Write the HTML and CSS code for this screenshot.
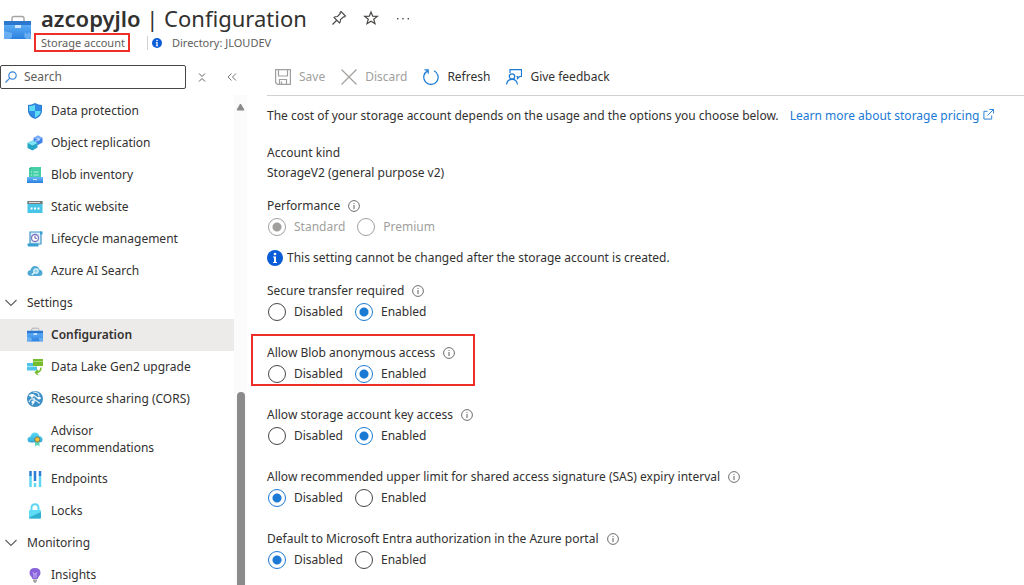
FILE: index.html
```
<!DOCTYPE html>
<html lang="en">
<head>
  <meta charset="UTF-8">
  <meta name="viewport" content="width=device-width, initial-scale=1.0">
  <title>azcopyjlo | Configuration</title>
  <link rel="stylesheet" href="styles.css">
</head>
<body>
  <!-- shared icons -->
  <svg class="sprite" aria-hidden="true">
    <defs>
      <linearGradient id="box-blue" x1="0" y1="0" x2="0" y2="1">
        <stop offset="0" stop-color="#6ab8fa" />
        <stop offset="1" stop-color="#2a80e0" />
      </linearGradient>
      <linearGradient id="cyan-fade" x1="0" y1="0" x2="0" y2="1">
        <stop offset="0" stop-color="#5fdcf5" />
        <stop offset="1" stop-color="#2fa8d8" />
      </linearGradient>
    </defs>
    <symbol id="i-toolbox" viewBox="0 0 27 26">
      <path d="M8 6V3.5Q8 1.5 10 1.5H18Q20 1.5 20 3.5V6" fill="none" stroke="#a3a3a3" stroke-width="1.400" />
      <rect x="0" y="6" width="27" height="18" rx="1" fill="url(#box-blue)" />
      <rect x="0" y="6" width="27" height="4" fill="#2b76cf" />
      <path d="M0 16L8 18V22L6 24H1L0 23Z" fill="#8cc4fa" opacity=".6" />
      <path d="M21 17L23 19L25 17L27 20V23L25 24H22L20 21Z" fill="#8cc4fa" opacity=".6" />
      <rect x="11" y="10" width="6" height="3" fill="#cfe6ff" />
    </symbol>
    <symbol id="i-info" viewBox="0 0 12 12">
      <circle cx="6" cy="6" r="5.400" fill="none" stroke="#605e5c" stroke-width="0.9" />
      <path d="M6 5V9" stroke="#605e5c" stroke-width="1" />
      <circle cx="6" cy="3.500" r=".6" fill="#605e5c" />
    </symbol>
    <symbol id="i-info-solid" viewBox="0 0 16 16">
      <circle cx="8" cy="8" r="8" fill="#0b5cd7" />
      <circle cx="8" cy="4" r="1.3" fill="#fff" />
      <path d="M6 6.500H9V12H10V13H6V12H7V7.500H6Z" fill="#fff" />
    </symbol>
    <symbol id="i-chevron" viewBox="0 0 12 12">
      <path d="M.5 3L6 8.500L11.500 3" fill="none" stroke="#605e5c" stroke-width="1.100" />
    </symbol>
  </svg>

  <div class="shell">
    <header class="header">
      <svg class="header-icon"><use href="#i-toolbox" /></svg>
      <div class="header-text">
        <div class="title-row">
          <h1><strong>azcopyjlo</strong> | Configuration</h1>
          <button class="icon-btn" type="button" aria-label="Pin">
            <svg viewBox="0 0 16 16" fill="none" stroke="#484644" stroke-width="1.100">
              <path d="M10 1.500L14.500 6L13.500 7L12.500 6.800L9.500 9.500Q9.500 12 8.500 13L3 7.500Q4 6.500 6.500 6.500L9.300 3.500L9 2.500ZM5.500 10.500L1.500 14.500" />
            </svg>
          </button>
          <button class="icon-btn" type="button" aria-label="Favorite">
            <svg viewBox="0 0 16 16" fill="none" stroke="#484644" stroke-width="1.200">
              <path d="M8 2L9.700 6.200L14.300 6.400L10.700 9.200L12 13.700L8 11.200L4 13.700L5.300 9.200L1.700 6.400L6.300 6.200Z" />
            </svg>
          </button>
          <button class="icon-btn" type="button" aria-label="More">
            <svg viewBox="0 0 16 16" fill="#484644">
              <rect x="2" y="8" width="1.400" height="1.400" /><rect x="7.300" y="8" width="1.400" height="1.400" /><rect x="12.600" y="8" width="1.400" height="1.400" />
            </svg>
          </button>
        </div>
        <div class="subtitle-row">
          <span class="resource-type marked">Storage account</span>
          <span class="directory">
            <svg><use href="#i-info-solid" /></svg>
            Directory: JLOUDEV
          </span>
        </div>
      </div>
    </header>

    <div class="body">
      <aside class="sidebar">
        <div class="search-row">
          <div class="search">
            <svg viewBox="0 0 12 12" fill="none" stroke="#3a86d8" stroke-width="1.200">
              <circle cx="7.500" cy="4.500" r="3.700" /><path d="M4.800 7.200L.5 11.500" />
            </svg>
            <input type="text" placeholder="Search" aria-label="Search">
          </div>
          <button class="icon-btn" type="button" aria-label="Expand all">
            <svg viewBox="0 0 16 16" fill="none" stroke="#605e5c"><path d="M5 4.500L8 7.500L11 4.500M5 12.500L8 9.500L11 12.500" /></svg>
          </button>
          <button class="icon-btn" type="button" aria-label="Collapse menu">
            <svg viewBox="0 0 16 16" fill="none" stroke="#797775"><path d="M7.500 4.500L4 8L7.500 11.500M12 4.500L8.500 8L12 11.500" /></svg>
          </button>
        </div>

        <div class="menu">
          <nav class="menu-list">
            <a class="item" href="#">
              <svg viewBox="0 0 16 16">
                <path d="M8 0Q11 2 15 2V8Q15 13 8 16Q1 13 1 8V2Q5 2 8 0Z" fill="#2b7cd3" />
                <path d="M8 1.500Q5.500 3 2.200 3V8H8Z" fill="#5fdcf5" /><path d="M8 8H13.800Q13.500 12 8 14.700Z" fill="#5fdcf5" />
                <path d="M8 1.500Q10.500 3 13.800 3V8H8ZM2.200 8H8V14.700Q2.500 12 2.200 8Z" fill="#2f8be6" />
              </svg>
              Data protection
            </a>
            <a class="item" href="#">
              <svg viewBox="0 0 16 16">
                <path d="M11 .5L15.500 3V7.500L11 10L6.500 7.500V3Z" fill="#3f82ea" /><path d="M11 .5L15.500 3L11 5.500L6.500 3Z" fill="#7db0fa" />
                <path d="M5.500 5.500L10.500 8V12.500L5.500 15.500L.5 13V8Z" fill="#27a5c6" /><path d="M5.500 5.500L10.500 8L5.500 10.500L.5 8Z" fill="#7fe3f3" />
                <path d="M8 6.500L12 4.500M10.500 3.500L12.500 4.300L11.500 6" fill="none" stroke="#d9e9ff" stroke-width=".8" />
              </svg>
              Object replication
            </a>
            <a class="item" href="#">
              <svg viewBox="0 0 16 16">
                <path d="M4 0H14V11H2V2Z" fill="#45cfa6" /><path d="M2 2L4 0V2Z" fill="#249c86" />
                <path d="M4 5H5M6.500 5H11.500M4 8H5M6.500 8H11.500" stroke="#b9f5df" />
                <path d="M0 10H16V16H0Z" fill="url(#box-blue)" /><path d="M6 12.500H10" stroke="#cfe6ff" />
              </svg>
              Blob inventory
            </a>
            <a class="item" href="#">
              <svg viewBox="0 0 16 16">
                <rect x=".5" y="2" width="15" height="12" fill="#48c5e6" /><rect x=".5" y="2" width="15" height="3" fill="#7b7b7b" />
                <path d="M2 3.500H13" stroke="#ddd" /><path d="M3.500 9.500H5.500M7 9.500H9M10.500 9.500H12.500" stroke="#fff" stroke-width="2" />
              </svg>
              Static website
            </a>
            <a class="item" href="#">
              <svg viewBox="0 0 16 16">
                <path d="M4 1H14V13H3V1Z" fill="#dff0fb" stroke="#3d95c9" stroke-width="1.200" />
                <path d="M13 .5H15.500V3.500H13ZM.5 12.500H11.500V15.500H2Q.5 15.500 .5 14Z" fill="#3aa0d2" />
                <circle cx="8" cy="7" r="3.500" fill="#fff" stroke="#7d75bd" stroke-width="1.300" /><path d="M8 5V7.300H9.800" fill="none" stroke="#5e5aa6" />
              </svg>
              Lifecycle management
            </a>
            <a class="item" href="#">
              <svg viewBox="0 0 16 16">
                <path d="M4 13Q.5 13 .5 10Q.5 7.500 3.500 7Q4.500 3 8 3Q11.500 3 12.300 6.500Q15.500 7 15.500 10Q15.500 13 12.500 13Z" fill="#50a9d4" />
                <circle cx="9" cy="8" r="2.200" fill="#8fd0ec" stroke="#e8f6fc" stroke-width="1.100" /><path d="M7.300 9.500L4.800 12" stroke="#e8f6fc" stroke-width="1.300" />
              </svg>
              Azure AI Search
            </a>
            <button class="group" type="button"><svg><use href="#i-chevron" /></svg>Settings</button>
            <a class="item active" href="#">
              <svg><use href="#i-toolbox" /></svg>
              Configuration
            </a>
            <a class="item" href="#">
              <svg viewBox="0 0 16 16">
                <rect x="0" y="4" width="10" height="7.500" fill="#50c3e6" /><path d="M0 7.500H10" stroke="#ace6f6" />
                <rect x="6" y="0" width="10" height="7" fill="#76bc2d" /><path d="M6 2.500H16" stroke="#b5e27c" stroke-width=".8" />
                <path d="M14 8.500Q14 13.500 8.500 13.500M11 11L8.500 13.500L11 16" fill="none" stroke="#76bc2d" stroke-width="1.500" />
              </svg>
              Data Lake Gen2 upgrade
            </a>
            <a class="item" href="#">
              <svg viewBox="0 0 16 16">
                <circle cx="8" cy="8" r="8" fill="#3b8fc6" />
                <path d="M2 5Q5 2 8 5T14 7M2 11Q4 6 8 9T13 12M6 1Q12 1 12 5M5 14Q8 10 7 7" fill="none" stroke="#e4f2fa" stroke-width="1.200" />
                <circle cx="5" cy="5" r="1.700" fill="#fff" /><circle cx="12" cy="7" r="1.600" fill="#fff" /><circle cx="6" cy="11" r="1.600" fill="#fff" />
              </svg>
              Resource sharing (CORS)
            </a>
            <a class="item two-line" href="#">
              <svg viewBox="0 0 16 16">
                <path d="M4 11.500Q.5 11.500 .5 8.500Q.5 6 3.500 5.500Q4.500 1.500 8 1.500Q11.500 1.500 12.300 5Q15.500 5.500 15.500 8.500Q15.500 11.500 12.500 11.500Z" fill="url(#cyan-fade)" />
                <path d="M8 10H12.500V15.500L10.200 14L8 15.500Z" fill="#5cd6b8" />
                <circle cx="10.300" cy="8.500" r="2.500" fill="#f5c33b" stroke="#7b6a3c" stroke-width=".8" />
              </svg>
              <span>Advisor<br>recommendations</span>
            </a>
            <a class="item" href="#">
              <svg viewBox="0 0 16 16">
                <path d="M3.500 0V5M8 0V10M13 0V5" stroke="#2b7cd3" stroke-width="2.500" />
                <path d="M3.500 5V16M8 12V16M13 5V16" stroke="#5fd6f3" stroke-width="2.500" />
              </svg>
              Endpoints
            </a>
            <a class="item" href="#">
              <svg viewBox="0 0 16 16">
                <path d="M4.500 8V5Q4.500 1.200 8 1.200Q11.500 1.200 11.500 5V8" fill="none" stroke="#5fd6f3" stroke-width="2" />
                <rect x="2" y="7" width="12" height="8.500" rx="1" fill="#5fdcf5" /><path d="M2 14.500L14 9V14.500Q14 15.500 13 15.500H3Q2 15.500 2 14.500Z" fill="#2fb0d0" />
              </svg>
              Locks
            </a>
            <button class="group" type="button"><svg><use href="#i-chevron" /></svg>Monitoring</button>
            <a class="item" href="#">
              <svg viewBox="0 0 16 16">
                <path d="M8 1Q13.500 1 13.500 6Q13.500 8 11.500 10L10.500 12H5.500L4.500 10Q2.500 8 2.500 6Q2.500 1 8 1Z" fill="#8661d9" />
                <path d="M5.800 5L7 7V11M10.200 5L9 7V11M7 7H9" fill="none" stroke="#d6c5ff" stroke-width=".8" /><path d="M6 12.500H10V14L8.500 16H7.500L6 14Z" fill="#a3a3a3" />
              </svg>
              Insights
            </a>
          </nav>
          <div class="scrollbar" aria-hidden="true">
            <svg viewBox="0 0 9 8"><path d="M4.500 1L8 7H1Z" fill="#8a8a8a" stroke="#8a8a8a" stroke-linejoin="round" /></svg>
            <div class="scroll-thumb"></div>
          </div>
        </div>
      </aside>

      <main class="main">
        <div class="toolbar">
          <button type="button" disabled>
            <svg viewBox="0 0 16 16" fill="none" stroke="#a19f9d" stroke-width="1.200"><path d="M.6 .6H15.400V15.400H2.500L.6 13.500ZM3.500 .6V7H12.500V.6M4.500 15.400V10.500H11.500V15.400M6.500 12.500V15" /></svg>
            Save
          </button>
          <button type="button" disabled>
            <svg viewBox="0 0 16 16" fill="none" stroke="#a19f9d" stroke-width="1.200"><path d="M.5 .5L15.500 15.500M15.500 .5L.5 15.500" /></svg>
            Discard
          </button>
          <button type="button">
            <svg viewBox="0 0 16 16" fill="none" stroke="#1a7ad4" stroke-width="1.200"><path d="M11 1.700A7.200 7.200 0 1 1 4.500 1.900M1.500 .9H5.200V4.700" /></svg>
            Refresh
          </button>
          <button type="button">
            <svg viewBox="0 0 16 16" fill="none" stroke="#1a7ad4" stroke-width="1.200"><path d="M4 4V.6H15.500V7.500H13.500L11.500 9.500V7.500H10.500" /><circle cx="6" cy="7.500" r="2.700" /><path d="M.6 15.500Q1 10.300 6 10.300Q11 10.300 11.400 15.500" /></svg>
            Give feedback
          </button>
        </div>

        <form class="settings">
          <p class="intro">The cost of your storage account depends on the usage and the options you choose below. <a href="#">Learn more about storage pricing
            <svg viewBox="0 0 12 12" fill="none" stroke="#1a7ad4"><path d="M5 2.500H1V11H9.500V7M7 .5H11.500V5M11.500 .5L5 7" /></svg></a></p>

          <div class="account-kind">
            <p>Account kind</p>
            <p>StorageV2 (general purpose v2)</p>
          </div>

          <fieldset class="field performance" disabled>
            <legend>Performance <svg><use href="#i-info" /></svg></legend>
            <div class="options">
              <label><input type="radio" name="performance" checked>Standard</label>
              <label><input type="radio" name="performance">Premium</label>
            </div>
          </fieldset>

          <p class="notice"><svg><use href="#i-info-solid" /></svg>This setting cannot be changed after the storage account is created.</p>

          <fieldset class="field">
            <legend>Secure transfer required <svg><use href="#i-info" /></svg></legend>
            <div class="options">
              <label><input type="radio" name="secure">Disabled</label>
              <label><input type="radio" name="secure" checked>Enabled</label>
            </div>
          </fieldset>

          <fieldset class="field marked">
            <legend>Allow Blob anonymous access <svg><use href="#i-info" /></svg></legend>
            <div class="options">
              <label><input type="radio" name="anonymous">Disabled</label>
              <label><input type="radio" name="anonymous" checked>Enabled</label>
            </div>
          </fieldset>

          <fieldset class="field">
            <legend>Allow storage account key access <svg><use href="#i-info" /></svg></legend>
            <div class="options">
              <label><input type="radio" name="key">Disabled</label>
              <label><input type="radio" name="key" checked>Enabled</label>
            </div>
          </fieldset>

          <fieldset class="field">
            <legend>Allow recommended upper limit for shared access signature (SAS) expiry interval <svg><use href="#i-info" /></svg></legend>
            <div class="options">
              <label><input type="radio" name="sas" checked>Disabled</label>
              <label><input type="radio" name="sas">Enabled</label>
            </div>
          </fieldset>

          <fieldset class="field">
            <legend>Default to Microsoft Entra authorization in the Azure portal <svg><use href="#i-info" /></svg></legend>
            <div class="options">
              <label><input type="radio" name="entra" checked>Disabled</label>
              <label><input type="radio" name="entra">Enabled</label>
            </div>
          </fieldset>
        </form>
      </main>
    </div>
  </div>
</body>
</html>
```
FILE: styles.css
```
*, *::after {
  box-sizing: border-box;
}

body {
  margin: 0;
  background: #fff;
  color: #323130;
  font-family: "Segoe UI", "Noto Sans", sans-serif;
  font-size: 12px;
  line-height: 20px;
}

button, input {
  font: inherit;
  color: inherit;
}

button {
  padding: 0;
  border: 0;
  background: none;
}

p {
  margin: 0;
}

svg {
  flex: none;
}

.sprite {
  position: absolute;
  width: 0;
  height: 0;
}

.shell {
  display: flex;
  flex-direction: column;
  height: 100vh;
  overflow: hidden;
}

/* header */
.header {
  display: flex;
  gap: 10px;
  padding: 2px 4px 0;
}

.header-icon {
  width: 27px;
  height: 26px;
  margin-top: 13px;
}

.title-row {
  display: flex;
  align-items: center;
  gap: 16px;
  height: 32px;
}

h1 {
  margin: 0 8px 0 0;
  font-size: 22px;
  font-weight: 400;
  line-height: 30px;
}

h1 strong {
  font-weight: 600;
}

.icon-btn {
  display: flex;
}

.icon-btn svg {
  width: 16px;
  height: 16px;
}

.subtitle-row {
  display: flex;
  align-items: center;
  height: 18px;
  color: #605e5c;
  font-size: 11px;
  line-height: 18px;
}

.directory {
  display: flex;
  align-items: center;
  gap: 10px;
  margin-left: 22px;
  padding-left: 4px;
  border-left: 1px solid #d2d0ce;
  line-height: 14px;
}

.directory svg {
  width: 10px;
  height: 10px;
}

/* red call-out frames */
.marked {
  position: relative;
}

.marked::after {
  content: "";
  position: absolute;
  inset: -1px -5px 0 -7px;
  border: 2px solid #ee2f28;
}

/* the offset parent starts below the legend */
.field.marked::after {
  inset: -29px auto -1px -16px;
  width: 224px;
}

/* sidebar */
.body {
  display: flex;
  flex: 1;
  min-height: 0;
}

.sidebar {
  display: flex;
  flex-direction: column;
  flex: none;
  width: 247px;
}

.search-row {
  display: flex;
  align-items: center;
  gap: 14px;
  height: 43px;
  padding: 7px 0 0;
}

.search {
  display: flex;
  align-items: center;
  gap: 7px;
  width: 186px;
  height: 24px;
  margin-right: -6px;
  padding-left: 4px;
  border: 1px solid #484644;
  border-radius: 2px;
}

.search svg {
  width: 12px;
  height: 12px;
}

.search input {
  flex: 1;
  min-width: 0;
  padding: 0;
  border: 0;
  outline: 0;
  background: none;
}

.search input::placeholder {
  color: #605e5c;
  opacity: 1;
}

.menu {
  display: flex;
  flex: 1;
  min-height: 0;
}

.menu-list {
  flex: 1;
  overflow: hidden;
}

.item, .group {
  display: flex;
  align-items: center;
  width: 100%;
  height: 32px;
  color: #323130;
  text-align: left;
  text-decoration: none;
}

.item {
  gap: 8px;
  padding-left: 27px;
}

.item svg {
  width: 16px;
  height: 16px;
}

.item.two-line {
  height: 48px;
  line-height: 17px;
}

.item.active {
  background: #edebe9;
  font-weight: 600;
}

.group {
  gap: 10px;
  padding-left: 5px;
}

.group svg {
  width: 12px;
  height: 12px;
}

.scrollbar {
  display: flex;
  flex-direction: column;
  align-items: center;
  justify-content: space-between;
  width: 13px;
  padding-top: 8px;
  background: #fbfbfb;
}

.scrollbar svg {
  width: 9px;
  height: 8px;
}

.scroll-thumb {
  width: 8px;
  height: 40%;
  border-radius: 4px 4px 0 0;
  background: #8a8a8a;
}

/* main pane */
.main {
  flex: 1;
  min-width: 0;
  padding-left: 20px;
}

.toolbar {
  display: flex;
  align-items: center;
  gap: 16px;
  height: 44px;
  padding: 7px 0 0 8px;
  border-bottom: 1px solid #d2d0ce;
}

.toolbar button {
  display: flex;
  align-items: center;
  gap: 8px;
}

.toolbar button:disabled {
  color: #a19f9d;
}

.toolbar svg {
  width: 16px;
  height: 16px;
}

.settings {
  padding-top: 10px;
}

.intro a {
  margin-left: 8px;
  color: #1a7ad4;
  text-decoration: none;
}

.intro svg {
  width: 11px;
  height: 11px;
}

.account-kind {
  margin: 17px 0 13px;
}

.field {
  min-width: 0;
  margin: 0 0 20px;
  padding: 0;
  border: 0;
}

.field.performance {
  margin-bottom: 10px;
}

legend {
  display: flex;
  align-items: center;
  gap: 8px;
  height: 20px;
  padding: 0;
}

legend svg {
  width: 12px;
  height: 12px;
}

.options {
  display: flex;
  gap: 12px;
  height: 22px;
  padding-left: 1px;
}

.options label {
  display: flex;
  align-items: center;
  gap: 8px;
}

.options input {
  appearance: none;
  width: 18px;
  height: 18px;
  margin: 0;
  border: 1px solid #484644;
  border-radius: 50%;
}

.options input:checked {
  border-color: #1a7ad4;
  background: radial-gradient(circle, #1a7ad4 4px, transparent 5px);
}

.field:disabled label {
  color: #a19f9d;
}

.field:disabled input {
  border-color: #a19f9d;
}

.field:disabled input:checked {
  background: radial-gradient(circle, #a19f9d 4px, transparent 5px);
}

.notice {
  display: flex;
  align-items: center;
  gap: 4px;
  margin-bottom: 13px;
}

.notice svg {
  width: 16px;
  height: 16px;
}
```
